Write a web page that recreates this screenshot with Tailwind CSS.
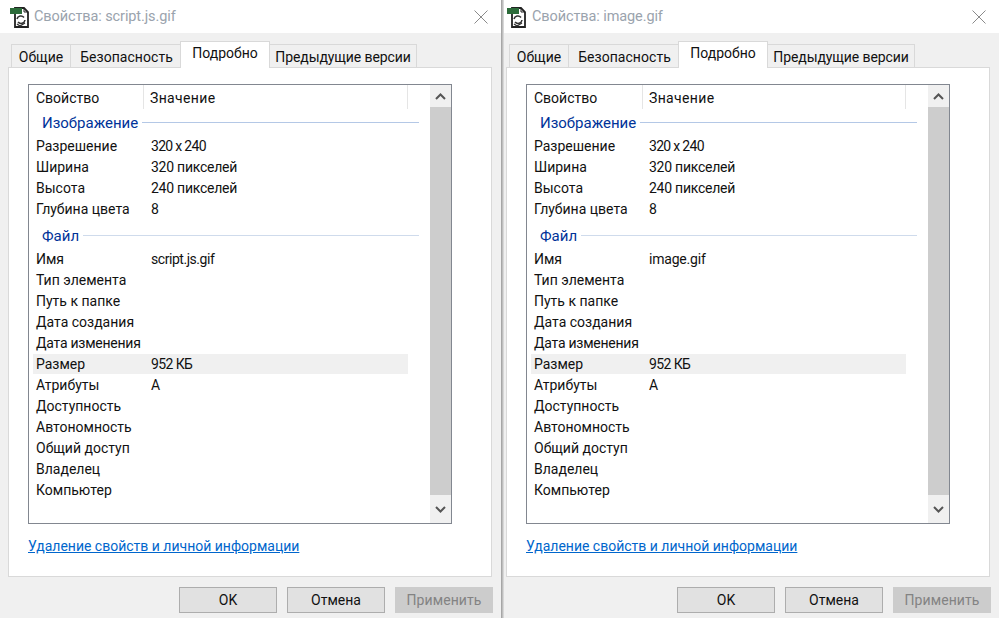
<!DOCTYPE html>
<html lang="ru"><head><meta charset="utf-8"><script src="https://cdn.jsdelivr.net/npm/@tailwindcss/browser@4"></script></head>
<body class="m-0 bg-[#f0f0f0]">
<div class="flex h-[618px] w-[999px] overflow-hidden font-['Roboto',sans-serif] text-[14px] text-[#111]">

<!-- LEFT -->
<section class="flex h-full w-[501px] shrink-0 flex-col">
  <header class="flex h-[33px] shrink-0 items-center bg-white pl-[10px] pr-[13px]">
    <svg width="20" height="22" viewBox="0 0 20 22" class="shrink-0"><path d="M5 2h9l4 4v15H5z" fill="#fff" stroke="#222" stroke-width="1.8"/><path d="M14 2v4h4" fill="none" stroke="#222"/><rect x="0" y="2" width="12" height="6" fill="#2c6b3a"/><path d="M7 13a4 4 0 0 1 7-1.5M15 14a4 4 0 0 1-7 2" fill="none" stroke="#333" stroke-width="1.6"/><path d="M7 18l3 2 5-3" fill="none" stroke="#333" stroke-width="1.4"/></svg>
    <span class="ml-[4px] text-[14.5px] tracking-[-0.1px] text-[#9aa3ad]">Свойства: script.js.gif</span>
    <svg width="14" height="14" viewBox="0 0 14 14" class="ml-auto"><path d="M.5.5l13 13M13.5.5l-13 13" stroke="#8a8a8a" stroke-width="1"/></svg>
  </header>
  <nav class="flex h-[34px] shrink-0 items-end pl-[11px]">
    <span class="flex h-[23px] w-[60px] items-center justify-center border border-b-0 border-[#d9d9d9] bg-[#f0f0f0] pt-[2px]">Общие</span>
    <span class="-ml-px flex h-[23px] w-[111px] items-center justify-center border border-b-0 border-[#d9d9d9] bg-[#f0f0f0] pl-[2px] pt-[2px] tracking-[0.05px]">Безопасность</span>
    <span class="z-10 -mb-px -ml-px flex h-[27px] w-[90px] items-center justify-center border border-b-0 border-[#d9d9d9] bg-white pb-[3px]">Подробно</span>
    <span class="-ml-px flex h-[23px] w-[148px] items-center justify-center border border-b-0 border-[#d9d9d9] bg-[#f0f0f0] pt-[2px] tracking-[-0.1px]">Предыдущие версии</span>
  </nav>
  <main class="ml-2 flex h-[510px] w-[484px] shrink-0 flex-col border border-[#d9d9d9] bg-white pl-[19px] pt-[16px]">
    <div class="flex h-[440px] w-[424px] border border-[#828790]">
      <div class="w-[401px] pl-[7px]">
        <div class="flex h-[24px] items-center"><span class="w-[107px] pt-[2px]">Свойство</span><span class="h-full w-px bg-[#e5e5e5]"></span><span class="pl-[6px] pt-[2px] tracking-[0.35px]">Значение</span><span class="ml-auto mr-[22px] h-full w-px bg-[#e5e5e5]"></span></div>
        <div class="ml-[6px] flex h-[27px] items-center pr-[11px]"><span class="pt-[2px] text-[15px] leading-none text-[#003399]">Изображение</span><span class="ml-1 h-px flex-1 bg-[#b4c8e6]"></span></div>
        <div class="flex h-[21px] items-center"><span class="w-[115px]">Разрешение</span><span class="tracking-[-0.7px]">320 x 240</span></div>
        <div class="flex h-[21px] items-center"><span class="w-[115px]">Ширина</span><span class="tracking-[-0.25px]">320 пикселей</span></div>
        <div class="flex h-[21px] items-center"><span class="w-[115px]">Высота</span><span class="tracking-[-0.25px]">240 пикселей</span></div>
        <div class="flex h-[21px] items-center"><span class="w-[115px]">Глубина цвета</span><span>8</span></div>
        <div class="ml-[6px] flex h-[29px] items-center pr-[11px] pt-[2px]"><span class="pt-[2px] text-[15px] leading-none text-[#003399]">Файл</span><span class="ml-1 h-px flex-1 bg-[#cfdbec]"></span></div>
        <div class="flex h-[21px] items-center"><span class="w-[115px]">Имя</span><span class="tracking-[-0.45px]">script.js.gif</span></div>
        <div class="flex h-[21px] items-center">Тип элемента</div>
        <div class="flex h-[21px] items-center">Путь к папке</div>
        <div class="flex h-[21px] items-center">Дата создания</div>
        <div class="flex h-[21px] items-center tracking-[-0.25px]">Дата изменения</div>
        <div class="-ml-[3px] mb-px mr-[22px] flex h-[20px] items-center bg-[#f0f0f0] pl-[3px]"><span class="w-[115px]">Размер</span><span class="tracking-[-0.6px]">952 КБ</span></div>
        <div class="flex h-[21px] items-center"><span class="w-[115px]">Атрибуты</span><span>A</span></div>
        <div class="flex h-[21px] items-center">Доступность</div>
        <div class="flex h-[21px] items-center">Автономность</div>
        <div class="flex h-[21px] items-center">Общий доступ</div>
        <div class="flex h-[21px] items-center">Владелец</div>
        <div class="flex h-[21px] items-center">Компьютер</div>
      </div>
      <div class="flex w-[21px] flex-col bg-[#f0f0f0]">
        <span class="flex h-[22px] items-center justify-center"><svg width="11" height="7" viewBox="0 0 11 7"><path d="M1 6l4.5-4.5L10 6" fill="none" stroke="#555" stroke-width="2"/></svg></span>
        <span class="flex-1 bg-[#cdcdcd]"></span>
        <span class="flex h-[28px] items-center justify-center"><svg width="11" height="7" viewBox="0 0 11 7"><path d="M1 1l4.5 4.5L10 1" fill="none" stroke="#555" stroke-width="2"/></svg></span>
      </div>
    </div>
    <a class="mt-[12px] text-[#0066cc] underline">Удаление свойств и личной информации</a>
  </main>
  <footer class="flex gap-[10px] pl-[179px] pt-[10px]">
    <span class="flex h-[26px] w-[98px] items-center justify-center border border-[#adadad] bg-[#e1e1e1]">OK</span>
    <span class="flex h-[26px] w-[98px] items-center justify-center border border-[#adadad] bg-[#e1e1e1]">Отмена</span>
    <span class="flex h-[26px] w-[98px] items-center justify-center bg-[#cccccc] tracking-[0.1px] text-[#838383]">Применить</span>
  </footer>
</section>

<div class="h-full w-[3px] shrink-0 bg-gradient-to-r from-[#9a9a9a] to-[#e4e4e4]"></div>

<!-- RIGHT -->
<section class="flex h-full w-[495px] shrink-0 flex-col">
  <header class="flex h-[33px] shrink-0 items-center bg-white pl-[3px] pr-[13px]">
    <svg width="20" height="22" viewBox="0 0 20 22" class="shrink-0"><path d="M5 2h9l4 4v15H5z" fill="#fff" stroke="#222" stroke-width="1.8"/><path d="M14 2v4h4" fill="none" stroke="#222"/><rect x="0" y="2" width="12" height="6" fill="#2c6b3a"/><path d="M7 13a4 4 0 0 1 7-1.5M15 14a4 4 0 0 1-7 2" fill="none" stroke="#333" stroke-width="1.6"/><path d="M7 18l3 2 5-3" fill="none" stroke="#333" stroke-width="1.4"/></svg>
    <span class="ml-[5px] text-[14.5px] tracking-[-0.1px] text-[#9aa3ad]">Свойства: image.gif</span>
    <svg width="14" height="14" viewBox="0 0 14 14" class="ml-auto"><path d="M.5.5l13 13M13.5.5l-13 13" stroke="#8a8a8a" stroke-width="1"/></svg>
  </header>
  <nav class="flex h-[34px] shrink-0 items-end pl-[5px]">
    <span class="flex h-[23px] w-[60px] items-center justify-center border border-b-0 border-[#d9d9d9] bg-[#f0f0f0] pt-[2px]">Общие</span>
    <span class="-ml-px flex h-[23px] w-[111px] items-center justify-center border border-b-0 border-[#d9d9d9] bg-[#f0f0f0] pl-[2px] pt-[2px] tracking-[0.05px]">Безопасность</span>
    <span class="z-10 -mb-px -ml-px flex h-[27px] w-[90px] items-center justify-center border border-b-0 border-[#d9d9d9] bg-white pb-[3px]">Подробно</span>
    <span class="-ml-px flex h-[23px] w-[148px] items-center justify-center border border-b-0 border-[#d9d9d9] bg-[#f0f0f0] pt-[2px] tracking-[-0.1px]">Предыдущие версии</span>
  </nav>
  <main class="ml-[2px] flex h-[510px] w-[484px] shrink-0 flex-col border border-[#d9d9d9] bg-white pl-[19px] pt-[16px]">
    <div class="flex h-[440px] w-[424px] border border-[#828790]">
      <div class="w-[401px] pl-[7px]">
        <div class="flex h-[24px] items-center"><span class="w-[108px] pt-[2px]">Свойство</span><span class="h-full w-px bg-[#e5e5e5]"></span><span class="pl-[6px] pt-[2px] tracking-[0.35px]">Значение</span><span class="ml-auto mr-[22px] h-full w-px bg-[#e5e5e5]"></span></div>
        <div class="ml-[6px] flex h-[27px] items-center pr-[11px]"><span class="pt-[2px] text-[15px] leading-none text-[#003399]">Изображение</span><span class="ml-1 h-px flex-1 bg-[#b4c8e6]"></span></div>
        <div class="flex h-[21px] items-center"><span class="w-[115px]">Разрешение</span><span class="tracking-[-0.7px]">320 x 240</span></div>
        <div class="flex h-[21px] items-center"><span class="w-[115px]">Ширина</span><span class="tracking-[-0.25px]">320 пикселей</span></div>
        <div class="flex h-[21px] items-center"><span class="w-[115px]">Высота</span><span class="tracking-[-0.25px]">240 пикселей</span></div>
        <div class="flex h-[21px] items-center"><span class="w-[115px]">Глубина цвета</span><span>8</span></div>
        <div class="ml-[6px] flex h-[29px] items-center pr-[11px] pt-[2px]"><span class="pt-[2px] text-[15px] leading-none text-[#003399]">Файл</span><span class="ml-1 h-px flex-1 bg-[#cfdbec]"></span></div>
        <div class="flex h-[21px] items-center"><span class="w-[115px]">Имя</span><span class="tracking-[-0.2px]">image.gif</span></div>
        <div class="flex h-[21px] items-center">Тип элемента</div>
        <div class="flex h-[21px] items-center">Путь к папке</div>
        <div class="flex h-[21px] items-center">Дата создания</div>
        <div class="flex h-[21px] items-center tracking-[-0.25px]">Дата изменения</div>
        <div class="-ml-[3px] mb-px mr-[22px] flex h-[20px] items-center bg-[#f0f0f0] pl-[3px]"><span class="w-[115px]">Размер</span><span class="tracking-[-0.6px]">952 КБ</span></div>
        <div class="flex h-[21px] items-center"><span class="w-[115px]">Атрибуты</span><span>A</span></div>
        <div class="flex h-[21px] items-center">Доступность</div>
        <div class="flex h-[21px] items-center">Автономность</div>
        <div class="flex h-[21px] items-center">Общий доступ</div>
        <div class="flex h-[21px] items-center">Владелец</div>
        <div class="flex h-[21px] items-center">Компьютер</div>
      </div>
      <div class="flex w-[21px] flex-col bg-[#f0f0f0]">
        <span class="flex h-[22px] items-center justify-center"><svg width="11" height="7" viewBox="0 0 11 7"><path d="M1 6l4.5-4.5L10 6" fill="none" stroke="#555" stroke-width="2"/></svg></span>
        <span class="flex-1 bg-[#cdcdcd]"></span>
        <span class="flex h-[28px] items-center justify-center"><svg width="11" height="7" viewBox="0 0 11 7"><path d="M1 1l4.5 4.5L10 1" fill="none" stroke="#555" stroke-width="2"/></svg></span>
      </div>
    </div>
    <a class="mt-[12px] text-[#0066cc] underline">Удаление свойств и личной информации</a>
  </main>
  <footer class="flex gap-[10px] pl-[173px] pt-[10px]">
    <span class="flex h-[26px] w-[98px] items-center justify-center border border-[#adadad] bg-[#e1e1e1]">OK</span>
    <span class="flex h-[26px] w-[98px] items-center justify-center border border-[#adadad] bg-[#e1e1e1]">Отмена</span>
    <span class="flex h-[26px] w-[98px] items-center justify-center bg-[#cccccc] tracking-[0.1px] text-[#838383]">Применить</span>
  </footer>
</section>
</div>
</body></html>
